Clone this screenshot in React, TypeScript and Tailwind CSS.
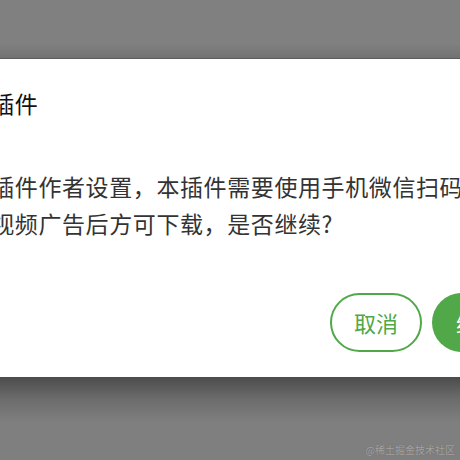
export default function App() {
  return (
    <div
      className="relative flex h-[460px] w-[460px] flex-col overflow-hidden bg-[#7f7f7f]"
      style={{ fontFamily: '"Noto Sans CJK SC", "Noto Sans", sans-serif' }}
    >
      {/* dimmed page above the dialog */}
      <div className="h-[59px] shrink-0 border-b border-[#5c5c5c] bg-[linear-gradient(to_bottom,#808080_75%,#727272)]" />

      {/* Dialog */}
      <div className="-ml-[80px] flex h-[318px] w-[635px] shrink-0 flex-col bg-white pl-6 pr-[31px] pt-[29px] pb-[25px]">
        <h2 className="text-[23px] leading-[30px] font-normal tracking-[0.6px] text-[#111]">下载插件</h2>
        <p className="mt-[50px] w-[530px] text-[23px] leading-[37px] tracking-[0.6px] text-[#333]">
          根据插件作者设置，本插件需要使用手机微信扫码观看视频广告后方可下载，是否继续?
        </p>
        <div className="mt-auto flex justify-end gap-[10px]">
          <button className="h-[59px] w-[92px] rounded-full border-2 border-[#50a848] text-[22px] text-[#50a848]">
            取消
          </button>
          <button className="h-[59px] w-[92px] rounded-full bg-[#50a848] text-[22px] text-white">
            继续
          </button>
        </div>
      </div>

      {/* dimmed page below the dialog */}
      <div className="flex-1 bg-[linear-gradient(to_bottom,#4b4b4b,#6c6c6c_22px,#7f7f7f_45px)]" />

      <span className="absolute bottom-[3px] right-[5px] text-[10px] text-[#a3a3a3] [text-shadow:0_0_1px_#666]">
        @稀土掘金技术社区
      </span>
    </div>
  )
}
